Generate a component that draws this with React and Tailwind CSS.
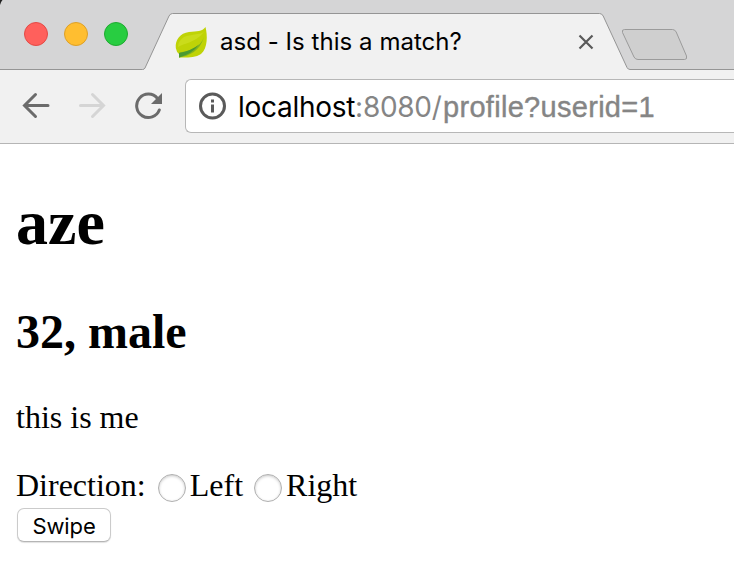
import React from "react";

function TabShapes() {
  return (
    <svg className="absolute inset-0" width="734" height="70" viewBox="0 0 734 70" fill="none">
      <path d="M0 0H2.5Q1 1.5 0 5Z" fill="#222" />
      <path
        d="M-2 69.5H142.500Q144.300 69.500 145 68L169 16Q170.300 13.500 172.500 13.500H599.500Q602 13.500 603.200 16L627 67.500Q628 69.500 630 69.500H736V72H-2Z"
        fill="#f1f1f1"
        stroke="#959595"
      />
      <path
        d="M624.500 29.500H672.500Q675 29.500 676.200 32L686.500 56Q687.500 59.500 684.500 59.500H638Q635.300 59.500 634 57L622.500 32.500Q621.500 29.500 624.500 29.500Z"
        fill="#cfcfcf"
        stroke="#9b9b9b"
      />
    </svg>
  );
}

function Leaf() {
  return (
    <svg width="34" height="34" viewBox="0 0 34 34" className="shrink-0">
      <path
        d="M30.500 1C27 6 22 5 14 6C5 7 0 14 0.800 22Q1.500 26 4 28L4 31.500C11 31.500 20 32 26 28C33 22 32.500 9 30.500 1Z"
        fill="#bfd307"
      />
      <path d="M29 6C24 9 16 8 9 11Q3 15 3 21C9 17 20 17 29 6Z" fill="#cadc1b" />
      <path d="M29 11C25 22 15 25 4.500 26.500L4 31.500C14 30 25 25 29 11Z" fill="#83b31e" />
      <path d="M4 27Q16 25 24 18.500Q17 28 4 31.500Z" fill="#4b9a32" />
    </svg>
  );
}

function TabStrip() {
  return (
    <div className="relative h-[70px] bg-[#d5d5d6]">
      <TabShapes />
      <div className="relative flex h-[70px] items-start">
        <div className="ml-6 mt-[22px] flex gap-4">
          <span className="size-6 rounded-full border border-[#e34a46] bg-[#ff605c]" />
          <span className="size-6 rounded-full border border-[#dda028] bg-[#ffbe30]" />
          <span className="size-6 rounded-full border border-[#1faa31] bg-[#28cd41]" />
        </div>
        <div className="ml-[47px] mt-[26px]">
          <Leaf />
        </div>
        <span className="ml-[11px] mt-[26px] w-[358px] whitespace-nowrap font-['Inter',sans-serif] text-[24px] leading-8 tracking-[0.04px] text-black">
          asd - Is this a match?
        </span>
        <svg className="mt-[34px]" width="16" height="16" viewBox="0 0 16 16" stroke="#5a5a5a" strokeWidth="2.200">
          <path d="M1.500 1.500L14.500 14.500M14.500 1.500L1.500 14.500" />
        </svg>
      </div>
    </div>
  );
}

function Toolbar() {
  return (
    <div className="flex h-[74px] items-start border-b border-[#b5b5b5] bg-[#f1f1f1]">
      <svg className="ml-[22px] mt-[22px]" width="28" height="28" viewBox="0 0 28 28" fill="none" stroke="#6b6b6b" strokeWidth="3" strokeLinecap="round">
        <path d="M26 13.500H3M13.500 2.500L2.500 13.500L13.500 24.500" />
      </svg>
      <svg className="ml-7 mt-[22px]" width="28" height="28" viewBox="0 0 28 28" fill="none" stroke="#d5d5d5" strokeWidth="3" strokeLinecap="round">
        <path d="M2.500 13.500H25M14.500 2.500L25.500 13.500L14.500 24.500" />
      </svg>
      <svg className="ml-7 mt-[22px]" width="30" height="28" viewBox="0 0 30 28" fill="none">
        <path d="M23.500 6.500A11.700 11.700 0 1 0 25.300 18" stroke="#6b6b6b" strokeWidth="3" strokeLinecap="round" />
        <path d="M28 1V12H17Z" fill="#6b6b6b" />
      </svg>
      <div className="ml-[21px] mt-[9px] flex h-[54px] flex-1 items-center rounded-l-[6px] border border-r-0 border-[#b7b7b7] bg-white pl-3">
        <svg className="shrink-0" width="30" height="28" viewBox="0 0 30 28" fill="none">
          <circle cx="14.500" cy="14" r="12" stroke="#5a5a5a" strokeWidth="3" />
          <path d="M14.500 12.500V20.500M14.500 7.500V10.500" stroke="#5a5a5a" strokeWidth="3" />
        </svg>
        <div className="ml-[10px] mt-[2px] flex items-baseline whitespace-nowrap font-['Inter',sans-serif] text-[28px] leading-9 text-black">
          <span className="w-[205px] tracking-[-0.28px]">
            localhost<span className="text-[#858585]">:8080/</span>
          </span>
          <span className="font-['Liberation_Sans',sans-serif] text-[29px] tracking-[0.3px] text-[#858585] [-webkit-text-stroke:0.4px_#858585]">profile?userid=1</span>
        </div>
      </div>
    </div>
  );
}

function Radio({ label, className }) {
  return (
    <label className={"flex " + className}>
      <span className="mt-[7px] size-7 rounded-full border border-[#b0b0b0] bg-white shadow-[inset_0_1px_3px_rgba(0,0,0,0.22)]" />
      <input type="radio" name="direction" className="sr-only" />
      <span className="ml-1">{label}</span>
    </label>
  );
}

export default function App() {
  return (
    <div className="h-[578px] w-[734px] overflow-hidden bg-white text-black">
      <TabStrip />
      <Toolbar />
      <main className="px-4 pt-[42px] font-['Liberation_Serif',serif]">
        <h1 className="text-[64px] font-bold leading-[74px]">aze</h1>
        <h2 className="mt-11 text-[48px] font-bold leading-[56px]">32, male</h2>
        <p className="mt-[39px] text-[32px] leading-9">this is me</p>
        <form className="mt-8" onSubmit={(e) => e.preventDefault()}>
          <div className="flex text-[32px] leading-9">
            <span>Direction:</span>
            <Radio label="Left" className="ml-[12px]" />
            <Radio label="Right" className="ml-[11px]" />
          </div>
          <button className="ml-px mt-[5px] flex h-[34px] w-[94px] items-center justify-center rounded-[7px] border border-[#cbcbcb] border-b-[#b5b5b5] bg-white pt-px font-['Inter',sans-serif] text-[22px] leading-7 tracking-[-0.1px] shadow-[0_1px_1px_rgba(0,0,0,0.12)]">
            Swipe
          </button>
        </form>
      </main>
    </div>
  );
}
